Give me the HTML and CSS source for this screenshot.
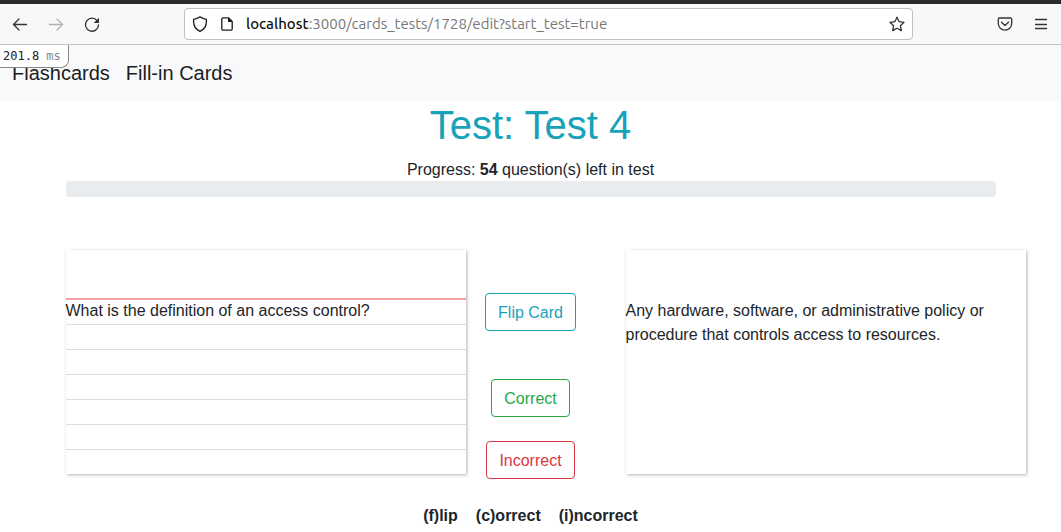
FILE: index.html
```html
<!DOCTYPE html>
<html lang="en">
<head>
<meta charset="utf-8">
<meta name="viewport" content="width=device-width, initial-scale=1">
<title>Test: Test 4</title>
<link rel="stylesheet" href="styles.css">
</head>
<body>
<div class="browser-bar">
  <div class="tools">
    <button class="tool" type="button" aria-label="Back"><svg viewBox="0 0 16 16"><path d="M14.500 8.500H1.500M7 3 1.500 8.500 7 14"/></svg></button>
    <button class="tool" type="button" aria-label="Forward" disabled><svg viewBox="0 0 16 16"><path d="M1.500 8.500h13M9 3l5.500 5.500L9 14"/></svg></button>
    <button class="tool" type="button" aria-label="Reload"><svg viewBox="0 0 16 16"><path d="M13.200 4.800A6.500 6.500 0 1 0 14.500 9"/><path class="solid" d="M15 1.700V7H9.700z"/></svg></button>
  </div>
  <div class="address">
    <svg class="icon" viewBox="0 0 16 16" aria-hidden="true"><path d="M8 .8C6.500 2 4 3 1.600 3.300 1.200 8.500 3 13.200 8 15.300c5-2.100 6.800-6.800 6.400-12C12 3 9.500 2 8 .8z"/></svg>
    <svg class="icon" viewBox="0 0 16 16" aria-hidden="true"><path d="M9.500 1.800H4a1.200 1.200 0 0 0-1.200 1.200v10A1.200 1.200 0 0 0 4 14.200h8a1.200 1.200 0 0 0 1.200-1.200V5.500z"/><path class="solid" d="M9 1.500V6h4.500z"/></svg>
    <div class="url"><span class="host">localhost</span>:3000/cards_tests/1728/edit?start_test=true</div>
    <button class="tool" type="button" aria-label="Bookmark this page"><svg viewBox="0 0 16 16"><path d="M8 1.200l2.100 4.500 4.900.6-3.600 3.400.9 4.900L8 12.200l-4.300 2.400.9-4.900L1 6.300l4.900-.6z"/></svg></button>
  </div>
  <div class="tools">
    <button class="tool" type="button" aria-label="Save to Pocket"><svg viewBox="0 0 16 16"><path d="M2.500 2h11a1.200 1.200 0 0 1 1.200 1.200V7.500a6.700 6.700 0 0 1-13.400 0V3.200A1.200 1.200 0 0 1 2.500 2zM4.500 6.200 8 9.500l3.500-3.300"/></svg></button>
    <button class="tool" type="button" aria-label="Open menu"><svg viewBox="0 0 16 16"><path d="M2.500 3.500h11M2.500 8.500h11M2.500 12.500h11"/></svg></button>
  </div>
</div>

<nav class="navbar">
  <a href="#flashcards">Flashcards</a>
  <a href="#fill-in">Fill-in Cards</a>
  <div class="timing">201.8 <span class="unit">ms</span></div>
</nav>

<main class="container">
  <h1 class="title">Test: Test 4</h1>
  <div class="progress-label" id="progress-label">Progress: <b>54</b> question(s) left in test</div>
  <div class="progress" role="progressbar" aria-labelledby="progress-label" aria-valuenow="0" aria-valuemin="0" aria-valuemax="100"></div>

  <div class="row">
    <div class="col"><div class="card ruled">What is the definition of an access control?</div></div>
    <div class="actions">
      <button class="btn flip" type="button">Flip Card</button>
      <button class="btn correct" type="button">Correct</button>
      <button class="btn incorrect" type="button">Incorrect</button>
    </div>
    <div class="col"><div class="card">Any hardware, software, or administrative policy or procedure that controls access to resources.</div></div>
  </div>

  <div class="shortcuts"><span>(f)lip</span><span>(c)orrect</span><span>(i)ncorrect</span></div>
</main>
</body>
</html>
```
FILE: styles.css
```css
* { box-sizing: border-box; }

body {
  margin: 0;
  background: #fff;
  color: #212529;
  font: 16px/24px "Liberation Sans", Arial, sans-serif;
}

/* Browser toolbar */
.browser-bar {
  display: flex;
  align-items: center;
  gap: 84px;
  height: 45px;
  padding: 0 12px;
  border-top: 4px solid #2d2b2d;
  border-bottom: 1px solid #c4c4c4;
  background: #f8f8f8;
}

.tools {
  display: flex;
  gap: 20px;
}

.tool {
  display: block;
  padding: 0;
  border: 0;
  background: none;
  color: #333;
}

.tool:disabled { color: #b0b0b0; }

.tool svg,
.icon {
  display: block;
  flex: none;
  width: 16px;
  height: 16px;
  fill: none;
  stroke: currentColor;
  stroke-width: 1.3;
  stroke-linecap: round;
  stroke-linejoin: round;
}

.tool .solid,
.icon .solid { fill: currentColor; stroke: none; }

.address {
  display: flex;
  flex: 1;
  align-items: center;
  gap: 11px;
  min-width: 0;
  height: 32px;
  padding: 0 7px;
  border: 1px solid #bfbfbf;
  border-radius: 4px;
  background: #fff;
  color: #1c1c1c;
}

.url {
  flex: 1;
  overflow: hidden;
  color: #777;
  font: 15px/22px Ubuntu, "Noto Sans", sans-serif;
  white-space: nowrap;
}

.host { color: #111; font-weight: 500; }

/* Site navigation */
.navbar {
  position: relative;
  display: flex;
  align-items: center;
  gap: 16px;
  height: 56px;
  padding: 0 12px;
  background: #f8f9fa;
  font-size: 20px;
}

.navbar a { color: #1c1c1d; text-decoration: none; }

.timing {
  position: absolute;
  top: 0;
  left: 0;
  padding: 0 7px 0 3px;
  border: solid #888;
  border-width: 0 1px 1px 0;
  border-radius: 0 0 8px 0;
  background: #fff;
  color: #222;
  font: 12px/22px "DejaVu Sans Mono", monospace;
}

.unit { color: #888; }

/* Test page */
.container {
  max-width: 960px;
  margin: 0 auto;
  padding: 0 15px;
}

.title {
  margin: 0 0 8px;
  color: #17a2b8;
  font-size: 40px;
  font-weight: 400;
  line-height: 48px;
  text-align: center;
}

.progress-label {
  padding-top: 1px;
  line-height: 23px;
  text-align: center;
}

.progress {
  height: 16px;
  border-radius: 4px;
  background: #e9ecef;
}

.row {
  display: grid;
  grid-template-columns: 5fr 2fr 5fr;
  margin: 53px -15px 0;
}

.col { min-width: 0; padding-left: 15px; }

.card {
  width: 400px;
  min-height: 224px;
  padding-top: 49px;
  background: #fff;
  box-shadow: 1px 1px 3px rgba(0, 0, 0, 0.3);
}

.ruled {
  background-image:
    linear-gradient(#fff 48px, #f1a0a3 48px, #f1a0a3 50px, transparent 50px),
    repeating-linear-gradient(transparent 0, transparent 24px, #dcdcdc 24px, #dcdcdc 25px);
}

.actions {
  display: flex;
  flex-direction: column;
  align-items: center;
  gap: 24px;
  padding-top: 43px;
}

.btn {
  padding: 7px 12px 5px;
  border: 1px solid currentColor;
  border-radius: 4px;
  background: #fff;
  font: inherit;
}

.flip { margin-bottom: 24px; color: #17a2b8; }
.correct { color: #28a745; }
.incorrect { color: #dc3545; }

.shortcuts {
  display: flex;
  justify-content: center;
  gap: 18px;
  margin-top: 25px;
  font-weight: 700;
}
```
